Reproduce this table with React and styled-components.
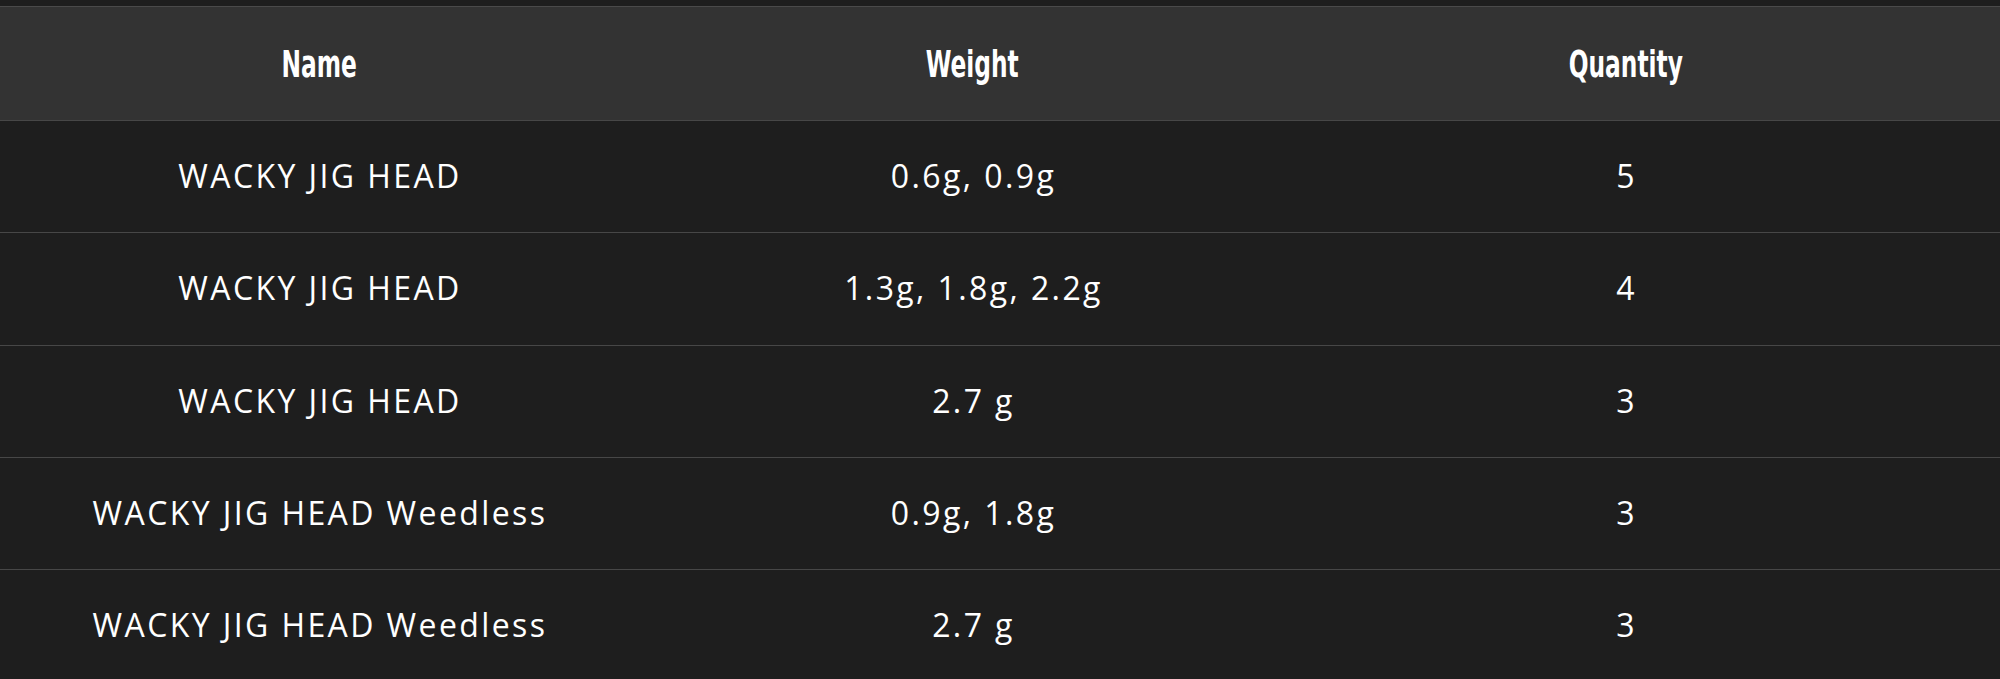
import React from "react";
import styled, { createGlobalStyle } from "styled-components";

const Global = createGlobalStyle`
  html, body { margin: 0; padding: 0; background: #1e1e1e; }
  #root { width: 2000px; }
`;

const Wrapper = styled.div`
  padding-top: 6px;
  background: #1e1e1e;
`;

const Table = styled.div`
  display: flex;
  flex-direction: column;
  border-top: 1px solid #4a4a4a;
`;

const Row = styled.div`
  display: grid;
  grid-template-columns: 638px 669px 637px 1fr;
  height: ${(p) => (p.$head ? "113px" : "111.25px")};
  align-items: center;
  background: ${(p) => (p.$head ? "#333333" : "#1e1e1e")};
  border-bottom: 1px solid #474747;
`;

const HeadCell = styled.div`
  text-align: center;
  color: #ffffff;
  font-family: "Liberation Sans Narrow", "DejaVu Sans Condensed", sans-serif;
  font-weight: 700;
  font-size: 38px;
  span {
    display: inline-block;
    transform: scaleX(0.682);
  }
`;

const Cell = styled.div`
  text-align: center;
  color: #ffffff;
  font-family: "Open Sans", "Noto Sans", sans-serif;
  font-size: 32px;
  letter-spacing: 2.4px;
  padding-left: 2px;
  margin-top: -2px;
`;

const rows = [
  ["WACKY JIG HEAD", "0.6g, 0.9g", "5"],
  ["WACKY JIG HEAD", "1.3g, 1.8g, 2.2g", "4"],
  ["WACKY JIG HEAD", "2.7 g", "3"],
  ["WACKY JIG HEAD Weedless", "0.9g, 1.8g", "3"],
  ["WACKY JIG HEAD Weedless", "2.7 g", "3"],
];

export default function App() {
  return (
    <Wrapper>
      <Global />
      <Table>
        <Row $head>
          <HeadCell><span>Name</span></HeadCell>
          <HeadCell><span>Weight</span></HeadCell>
          <HeadCell><span>Quantity</span></HeadCell>
          <div />
        </Row>
        {rows.map((r, i) => (
          <Row key={i}>
            <Cell>{r[0]}</Cell>
            <Cell>{r[1]}</Cell>
            <Cell>{r[2]}</Cell>
            <div />
          </Row>
        ))}
      </Table>
    </Wrapper>
  );
}
